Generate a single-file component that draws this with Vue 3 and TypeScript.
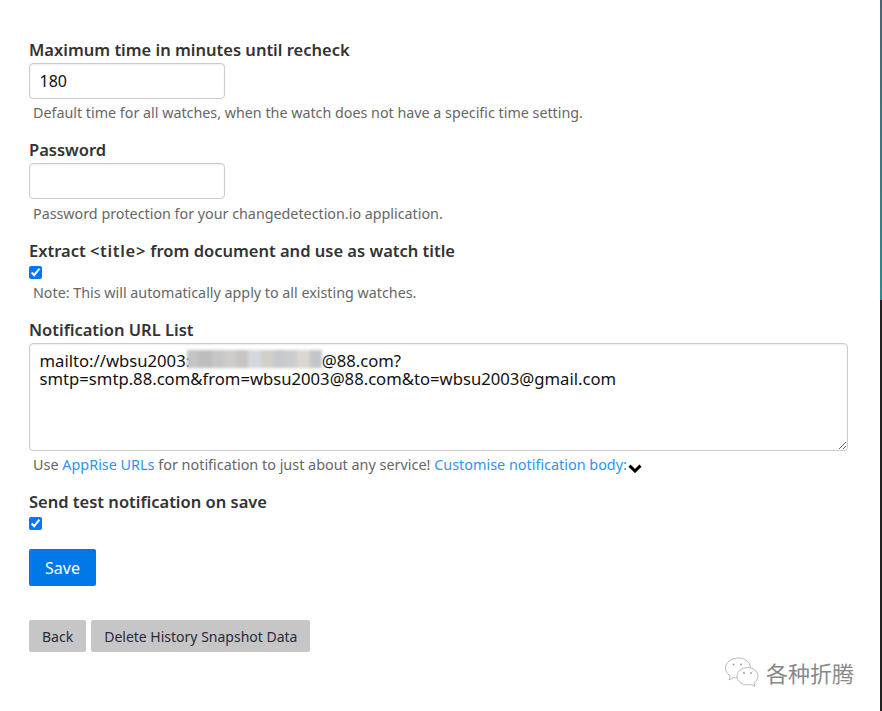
<script setup lang="ts">
const hidden = "\u00a0".repeat(30) + "\u200a";
const urls = `mailto://wbsu2003:${hidden}@88.com?\nsmtp=smtp.88.com&from=wbsu2003@88.com&to=wbsu2003@gmail.com`;
const mosaic = ["#c4c4c4","#bcbebe","#c6c6c6","#cfcbcb","#c8c4c4","#d4d8dc","#d2cfca","#c6c8cc","#cccccc","#dad6d0","#c2c6c8"];
</script>

<template>
  <div class="page">
    <main class="sheet">
      <form class="form" @submit.prevent>
        <div class="group">
          <label class="label" for="recheck">Maximum time in minutes until recheck</label>
          <input id="recheck" class="input" type="text" value="180" />
          <span class="help">Default time for all watches, when the watch does not have a specific time setting.</span>
        </div>
        <div class="group group-pw">
          <label class="label" for="password">Password</label>
          <input id="password" class="input" type="password" />
          <span class="help">Password protection for your changedetection.io application.</span>
        </div>
        <div class="group group-extract">
          <label class="label" for="extract">Extract <span class="tag">&lt;title&gt;</span> from document and use as watch title</label>
          <input id="extract" class="check" type="checkbox" checked />
          <span class="help help-tight">Note: This will automatically apply to all existing watches.</span>
        </div>
        <div class="group group-urls">
          <label class="label" for="urls">Notification URL List</label>
          <div class="area-wrap">
            <textarea id="urls" class="area" :value="urls"></textarea>
            <div class="mosaic">
              <i v-for="(c, i) in mosaic" :key="i" :style="{ background: c }"></i>
            </div>
          </div>
          <span class="help">Use <a href="#">AppRise URLs</a> for notification to just about any service! <a href="#">Customise notification body:</a><svg class="chev" viewBox="0 0 14 10" width="14" height="10"><path d="M1.500 2.600 7 8 12.500 2.600" fill="none" stroke="#000" stroke-width="3"/></svg></span>
        </div>
        <div class="group group-send">
          <label class="label" for="send">Send test notification on save</label>
          <input id="send" class="check" type="checkbox" checked />
        </div>
        <button class="save" type="submit">Save</button>
        <div class="actions">
          <a class="grey" href="#">Back</a>
          <a class="grey" href="#">Delete History Snapshot Data</a>
        </div>
      </form>
      <div class="mark">
        <svg viewBox="0 0 36 32" width="36" height="32" fill="#fff" stroke="#a8a8a8" stroke-width="0.8">
          <path d="M14 2C7 2 1.500 6.500 1.500 12c0 3.200 1.800 6 4.700 7.900L5 24l4.700-2.500c1.400.4 2.800.6 4.300.6 6.900 0 12.500-4.500 12.500-10.100S20.900 2 14 2z"/>
          <path d="M23.500 11.500c-5.800 0-10.500 3.900-10.500 8.700s4.700 8.700 10.500 8.700c1.200 0 2.300-.2 3.400-.5l4 2-1-3.500c2.500-1.600 4.100-4 4.100-6.700 0-4.800-4.700-8.700-10.500-8.700z"/>
          <circle cx="9.500" cy="8.500" r="0.9" fill="#999" stroke="none"/>
          <circle cx="17" cy="8.500" r="0.9" fill="#999" stroke="none"/>
          <circle cx="20" cy="17" r="0.9" fill="#999" stroke="none"/>
          <circle cx="27" cy="17" r="0.9" fill="#999" stroke="none"/>
        </svg>
        <span class="mark-text">各种折腾</span>
      </div>
    </main>
    <div class="rail"></div>
  </div>
</template>

<style scoped>
.page {
  display: flex;
  width: 882px;
  height: 711px;
  overflow: hidden;
  background: #fff;
  font-family: "Noto Sans", "Open Sans", sans-serif;
}
.sheet {
  position: relative;
  flex: 1;
  padding: 38px 32px 0 29px;
}
.rail {
  width: 2px;
  height: 100%;
  background: linear-gradient(to bottom, #4a6472 0, #2c8a8c 300px, #222 300px, #222 100%);
}
.form {
  display: flex;
  flex-direction: column;
}
.group {
  display: flex;
  flex-direction: column;
  align-items: flex-start;
  margin-bottom: 14px;
}
.group-pw .help {
  margin-top: 4px;
}
.group-extract .label {
  margin-bottom: 0;
}
.group-urls .help {
  font-size: 14.4px;
}
.group-send {
  margin-bottom: 18px;
}
.group-send .check {
  margin-top: 2px;
}
.label {
  margin-bottom: 1px;
  font-size: 16.5px;
  font-weight: 600;
  line-height: 24px;
  color: #333;
}
.tag {
  letter-spacing: 0.7px;
}
.input {
  box-sizing: border-box;
  width: 196px;
  height: 36px;
  padding: 0 9.5px;
  border: 1px solid #ccc;
  border-radius: 4px;
  box-shadow: inset 0 1px 2px rgba(0, 0, 0, 0.08);
  font: 16px "Noto Sans", sans-serif;
  color: #111;
  outline: none;
}
.help {
  padding-left: 4px;
  margin-top: 3px;
  font-size: 14.3px;
  line-height: 22px;
  color: #666;
}
.help-tight {
  margin-top: 2px;
}
.help a {
  color: #2f93f4;
  text-decoration: none;
}
.chev {
  margin-left: 1px;
  vertical-align: -3px;
}
.check {
  width: 13px;
  height: 13px;
  margin: 3px 0 1px;
  accent-color: #0075ff;
}
.area-wrap {
  position: relative;
  width: 819px;
  height: 108px;
}
.area {
  display: block;
  box-sizing: border-box;
  width: 100%;
  height: 100%;
  padding: 8px 9.5px;
  border: 1px solid #ccc;
  border-radius: 4px;
  box-shadow: inset 0 1px 2px rgba(0, 0, 0, 0.08);
  font: 16.67px/18px "Noto Sans", sans-serif;
  color: #111;
  outline: none;
}
.mosaic {
  position: absolute;
  left: 158px;
  top: 7px;
  display: flex;
  width: 135px;
  height: 18px;
  filter: blur(1.5px);
}
.mosaic i {
  flex: 1;
}
.save {
  align-self: flex-start;
  width: 67px;
  height: 37px;
  padding: 0;
  border: 0;
  border-radius: 2px;
  background: #0078e7;
  color: #fff;
  font: 16px "Noto Sans", sans-serif;
}
.actions {
  display: flex;
  gap: 5px;
  margin-top: 34px;
}
.grey {
  display: flex;
  align-items: center;
  height: 32px;
  padding: 0 13px;
  border-radius: 2px;
  background: #c6c6c6;
  color: #2a2a3a;
  font-size: 14px;
  text-decoration: none;
}
.mark {
  position: absolute;
  left: 724px;
  top: 656px;
  display: flex;
  align-items: center;
  gap: 6px;
}
.mark-text {
  font: 22px "Noto Sans CJK SC", sans-serif;
  color: #888;
  text-shadow: 0 0 1px #fff;
}
</style>
